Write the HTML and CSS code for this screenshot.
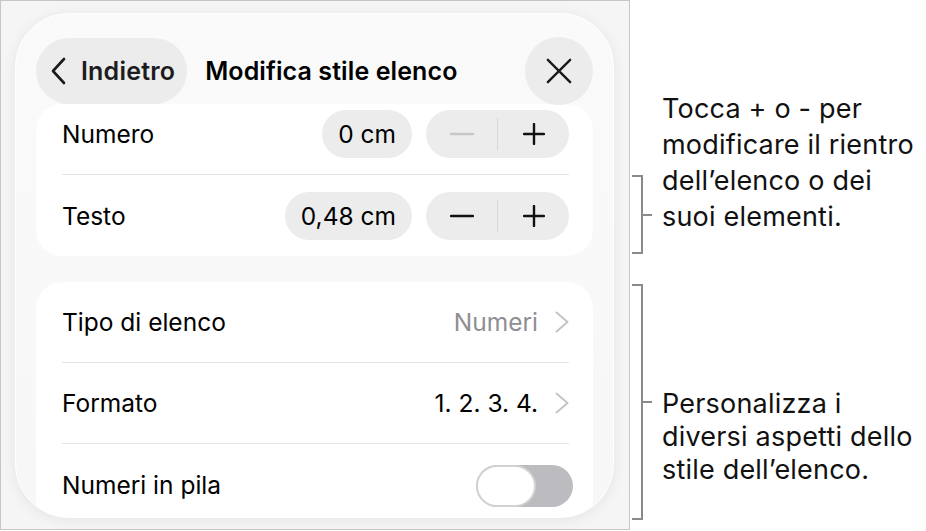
FILE: index.html
```html
<!DOCTYPE html>
<html>
<head>
    <title>Modifica stile elenco</title>
    <link rel="stylesheet" href="styles.css">
</head>
<body>
    <div class="stage">
        <div class="frame">
            <div class="panel">
                <div class="topbar">
                    <button class="back">
                        <svg width="18" height="28" viewBox="0 0 18 28"><path d="M15 2 L4 14 L15 26" fill="none" stroke="#1c1c1e" stroke-width="2.6" stroke-linecap="round" stroke-linejoin="round"/></svg>
                        <span>Indietro</span>
                    </button>
                    <div class="title">Modifica stile elenco</div>
                    <button class="close">
                        <svg width="28" height="28" viewBox="0 0 28 28"><path d="M2 2 L26 26 M26 2 L2 26" fill="none" stroke="#1c1c1e" stroke-width="2.6" stroke-linecap="round"/></svg>
                    </button>
                </div>

                <div class="section">
                    <div class="row row-cut">
                        <span class="label">Numero</span>
                        <div class="controls">
                            <span class="value">0 cm</span>
                            <div class="stepper">
                                <span class="step off"><svg width="24" height="24" viewBox="0 0 24 24"><path d="M1 12 H23" stroke="currentColor" stroke-width="2.4" stroke-linecap="round"/></svg></span>
                                <span class="step"><svg width="22" height="22" viewBox="0 0 22 22"><path d="M1 11 H21 M11 1 V21" stroke="currentColor" stroke-width="2.4" stroke-linecap="round"/></svg></span>
                            </div>
                        </div>
                    </div>
                    <div class="row">
                        <span class="label">Testo</span>
                        <div class="controls">
                            <span class="value">0,48 cm</span>
                            <div class="stepper">
                                <span class="step"><svg width="24" height="24" viewBox="0 0 24 24"><path d="M1 12 H23" stroke="currentColor" stroke-width="2.4" stroke-linecap="round"/></svg></span>
                                <span class="step"><svg width="22" height="22" viewBox="0 0 22 22"><path d="M1 11 H21 M11 1 V21" stroke="currentColor" stroke-width="2.4" stroke-linecap="round"/></svg></span>
                            </div>
                        </div>
                    </div>
                </div>

                <div class="section section-list">
                    <div class="row">
                        <span class="label">Tipo di elenco</span>
                        <div class="controls">
                            <span class="detail muted">Numeri</span>
                            <svg class="chev" width="14" height="22" viewBox="0 0 14 22"><path d="M1.5 1.5 L12.5 11 L1.5 20.5" fill="none" stroke="#c4c4c7" stroke-width="2" stroke-linecap="round" stroke-linejoin="round"/></svg>
                        </div>
                    </div>
                    <div class="row">
                        <span class="label">Formato</span>
                        <div class="controls">
                            <span class="detail">1. 2. 3. 4.</span>
                            <svg class="chev" width="14" height="22" viewBox="0 0 14 22"><path d="M1.5 1.5 L12.5 11 L1.5 20.5" fill="none" stroke="#c4c4c7" stroke-width="2" stroke-linecap="round" stroke-linejoin="round"/></svg>
                        </div>
                    </div>
                    <div class="row">
                        <span class="label">Numeri in pila</span>
                        <div class="controls">
                            <span class="toggle"><span class="knob"></span></span>
                        </div>
                    </div>
                </div>
            </div>
        </div>

        <div class="notes">
            <div class="note note-first">
                <span class="bracket"></span>
                <p>Tocca + o - per<br>modificare il rientro<br>dell’elenco o dei<br>suoi elementi.</p>
            </div>
            <div class="note note-second">
                <span class="bracket"></span>
                <p>Personalizza i<br>diversi aspetti dello<br>stile dell’elenco.</p>
            </div>
        </div>
    </div>
</body>
</html>
```

FILE: styles.css
```css
body {
    margin: 0;
    padding: 0;
    background: #ffffff;
    font-family: Inter, "Noto Sans", sans-serif;
    color: #000000;
}
.stage {
    display: flex;
    width: 926px;
    height: 531px;
}
.frame {
    width: 630px;
    height: 530px;
    box-sizing: border-box;
    border: 1px solid #c6c6c6;
    background: #f5f5f5;
    padding: 12px 15px 11px 14px;
    display: flex;
    flex: none;
}
.panel {
    flex: 1;
    border: 1px solid #ffffff;
    border-radius: 54px;
    background: linear-gradient(#fafafa, #f7f7f7);
    box-shadow: 0 2px 14px rgba(0, 0, 0, 0.07);
    padding: 23px 20px 0 20px;
    overflow: hidden;
}
.topbar {
    display: flex;
    align-items: center;
    height: 67px;
}
button {
    font-family: inherit;
    border: 0;
    cursor: pointer;
}
.back {
    display: flex;
    align-items: center;
    gap: 14px;
    height: 66px;
    padding: 0 12px 0 13px;
    border-radius: 33px;
    background: #ececec;
    font-size: 25px;
    font-weight: 600;
    letter-spacing: 0.2px;
    color: #1c1c1e;
}
.title {
    flex: 1;
    margin-left: 18px;
    font-size: 25px;
    font-weight: 600;
    letter-spacing: 0.1px;
}
.close {
    width: 68px;
    height: 68px;
    border-radius: 50%;
    background: #ececec;
    display: flex;
    align-items: center;
    justify-content: center;
    padding: 0;
}
.close svg {
    width: 26px;
    height: 26px;
}
.section {
    background: #ffffff;
    border-radius: 26px;
}
.section-list {
    margin-top: 26px;
}
.row {
    display: flex;
    align-items: center;
    justify-content: space-between;
    height: 81px;
    margin: 0 24px 0 26px;
    box-sizing: border-box;
    border-bottom: 1px solid #e4e4e4;
    font-size: 24.5px;
}
.row:last-child {
    border-bottom: 0;
}
.row-cut {
    height: 71px;
    padding-bottom: 11px;
}
.controls {
    display: flex;
    align-items: center;
}
.value {
    height: 48px;
    line-height: 48px;
    padding: 0 16px;
    border-radius: 24px;
    background: #ececec;
    margin-right: 14px;
}
.stepper {
    display: flex;
    align-items: center;
    width: 143px;
    height: 48px;
    border-radius: 24px;
    background: #ececec;
}
.step {
    flex: 1;
    display: flex;
    align-items: center;
    justify-content: center;
    color: #111111;
}
.step:first-child {
    border-right: 1px solid #d6d6d6;
    height: 32px;
}
.step.off {
    color: #c6c6c6;
}
.detail {
    margin-right: 17px;
}
.muted {
    color: #8e8e93;
}
.toggle {
    display: flex;
    width: 97px;
    height: 42px;
    border-radius: 21px;
    background: #bbbbc0;
    margin-right: -4px;
    margin-top: 3px;
}
.knob {
    width: 60px;
    height: 42px;
    box-sizing: border-box;
    border-radius: 21px;
    border: 2px solid #d2d2d4;
    background: #ffffff;
}
.notes {
    flex: 1;
    padding: 91px 0 0 2px;
}
.note {
    display: flex;
    align-items: flex-start;
}
.note p {
    margin: 0;
    padding-left: 19px;
    font-size: 27px;
    letter-spacing: 0.2px;
    color: #111111;
    white-space: nowrap;
}
.bracket {
    position: relative;
    width: 9px;
    border: 2px solid #8a8a8a;
    border-left: 0;
    flex: none;
}
.bracket::after {
    content: "";
    position: absolute;
    left: 9px;
    top: 50%;
    margin-top: -1px;
    width: 11px;
    height: 2px;
    background: #8a8a8a;
}
.note-first .bracket {
    margin-top: 84px;
    height: 75px;
}
.note-first p {
    line-height: 36px;
}
.note-second {
    margin-top: 30px;
}
.note-second .bracket {
    height: 232px;
}
.note-second p {
    margin-top: 103px;
    line-height: 33px;
}
```
